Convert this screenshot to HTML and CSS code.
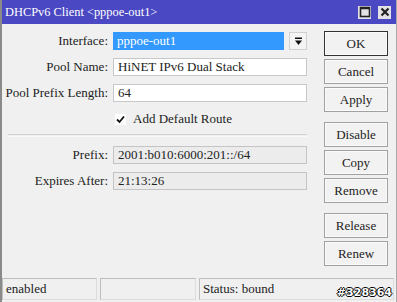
FILE: index.html
```html
<!DOCTYPE html>
<html lang="en">
<head>
  <meta charset="UTF-8" />
  <title>DHCPv6 Client &lt;pppoe-out1&gt;</title>
  <link rel="stylesheet" href="styles.css">
</head>
<body>
  <div class="window">
    <div class="titlebar">
      <span class="title">DHCPv6 Client &lt;pppoe-out1&gt;</span>
      <div class="title-buttons">
        <span class="tbtn">
          <svg width="12" height="12" viewBox="0 0 12 12"><rect x="1.5" y="1.5" width="9" height="9" fill="none" stroke="#222" stroke-width="1.6"/><line x1="1.5" y1="2.5" x2="10.5" y2="2.5" stroke="#222" stroke-width="1.5"/></svg>
        </span>
        <span class="tbtn">
          <svg width="12" height="12" viewBox="0 0 12 12"><path d="M2.5 2.5 L9.5 9.5 M9.5 2.5 L2.5 9.5" stroke="#222" stroke-width="2.2"/></svg>
        </span>
      </div>
    </div>

    <div class="main">
      <div class="form">
        <div class="row">
          <label>Interface:</label>
          <div class="combo">
            <span class="combo-value">pppoe-out1</span>
            <span class="combo-arrow">
              <svg width="9" height="9" viewBox="0 0 9 9"><rect x="1" y="0.5" width="7" height="1.5" fill="#111"/><path d="M1 3.5 H8 L4.5 8 Z" fill="#111"/></svg>
            </span>
          </div>
        </div>
        <div class="row">
          <label>Pool Name:</label>
          <div class="field">HiNET IPv6 Dual Stack</div>
        </div>
        <div class="row">
          <label>Pool Prefix Length:</label>
          <div class="field">64</div>
        </div>
        <div class="row">
          <span></span>
          <div class="check">
            <span class="box">
              <svg width="9" height="9" viewBox="0 0 9 9"><path d="M1 4.5 L3.5 7 L8 1.5" fill="none" stroke="#111" stroke-width="1.8"/></svg>
            </span>
            Add Default Route
          </div>
        </div>
        <div class="separator"></div>
        <div class="row">
          <label>Prefix:</label>
          <div class="field readonly">2001:b010:6000:201::/64</div>
        </div>
        <div class="row">
          <label>Expires After:</label>
          <div class="field readonly">21:13:26</div>
        </div>
      </div>

      <div class="buttons">
        <button class="default">OK</button>
        <button>Cancel</button>
        <button>Apply</button>
        <button class="group">Disable</button>
        <button>Copy</button>
        <button>Remove</button>
        <button class="group">Release</button>
        <button>Renew</button>
      </div>
    </div>

    <div class="statusbar">
      <div class="status">enabled</div>
      <div class="status"></div>
      <div class="status">Status: bound</div>
    </div>

    <span class="watermark">#328364</span>
  </div>
</body>
</html>
```

FILE: styles.css
```css
body {
  margin: 0;
  font-family: 'Liberation Serif', 'Times New Roman', serif;
  font-size: 13px;
  color: #222;
}

.window {
  position: relative;
  width: 397px;
  height: 302px;
  box-sizing: border-box;
  background: #f0f0f0;
  border-left: 2px solid #8a8a8a;
  border-right: 1px solid #a8a8a8;
  display: flex;
  flex-direction: column;
  overflow: hidden;
}

.titlebar {
  height: 24px;
  background: #4a48c2;
  color: white;
  display: flex;
  align-items: center;
  justify-content: space-between;
  margin-left: -2px;
  margin-right: -1px;
  padding-left: 5px;
}

.title {
  font-size: 12.4px;
}

.title-buttons {
  display: flex;
  gap: 7px;
  margin-right: 6px;
}

.tbtn {
  width: 13px;
  height: 13px;
  background: #e2e2e6;
  display: flex;
  align-items: center;
  justify-content: center;
}

.main {
  flex: 1;
  display: flex;
  padding-top: 7px;
}

.form {
  width: 305px;
  padding-top: 1px;
  display: flex;
  flex-direction: column;
  gap: 8px;
}

.row {
  display: grid;
  grid-template-columns: 106px 194px;
  column-gap: 5px;
  height: 18px;
  align-items: center;
}

.row label {
  text-align: right;
}

.field {
  height: 18px;
  box-sizing: border-box;
  background: white;
  border: 1px solid #c8c8c8;
  padding: 0 4px;
  line-height: 16px;
  white-space: nowrap;
}

.field.readonly {
  background: #ececec;
  border-color: #c4c4c4;
}

.combo {
  height: 18px;
  display: flex;
  gap: 5px;
}

.combo-value {
  flex: 1;
  background: #3399ff;
  color: white;
  line-height: 18px;
  padding-left: 4px;
}

.combo-arrow {
  width: 18px;
  box-sizing: border-box;
  border: 1px solid #d0d0d0;
  background: #f4f4f4;
  display: flex;
  align-items: center;
  justify-content: center;
}

.check {
  display: flex;
  align-items: center;
  gap: 7px;
  padding-left: 2px;
}

.check .box {
  width: 11px;
  height: 11px;
  box-sizing: border-box;
  background: white;
  display: flex;
  align-items: center;
  justify-content: center;
}

.separator {
  height: 1px;
  margin: -2px 0 1px 6px;
  border-top: 1px solid #d2d2d2;
  border-bottom: 1px solid #fafafa;
}

.buttons {
  margin-left: 17px;
  width: 64px;
  display: flex;
  flex-direction: column;
  gap: 3px;
}

.buttons button {
  height: 25px;
  font-family: 'Liberation Serif', 'Times New Roman', serif;
  font-size: 13px;
  color: #222;
  background: #f2f2f2;
  border: 1px solid #a0a0a0;
  box-shadow: inset 0 0 0 1px #fbfbfb;
  padding: 0;
}

.buttons button.default {
  border-color: #333;
}

.buttons button.group {
  margin-top: 7px;
}

.statusbar {
  height: 24px;
  display: grid;
  grid-template-columns: 95px 96px 1fr;
  column-gap: 3px;
  padding-right: 2px;
}

.status {
  height: 22px;
  box-sizing: border-box;
  border: 1px solid;
  border-color: #bdbdbd #dcdcdc #dcdcdc #bdbdbd;
  padding-left: 3px;
  line-height: 20px;
}

.watermark {
  position: absolute;
  right: 4px;
  bottom: 3px;
  font-family: 'DejaVu Sans', sans-serif;
  font-weight: bold;
  font-size: 11px;
  color: white;
  text-shadow: 1px 0 0 #000, -1px 0 0 #000, 0 1px 0 #000, 0 -1px 0 #000;
}
```
